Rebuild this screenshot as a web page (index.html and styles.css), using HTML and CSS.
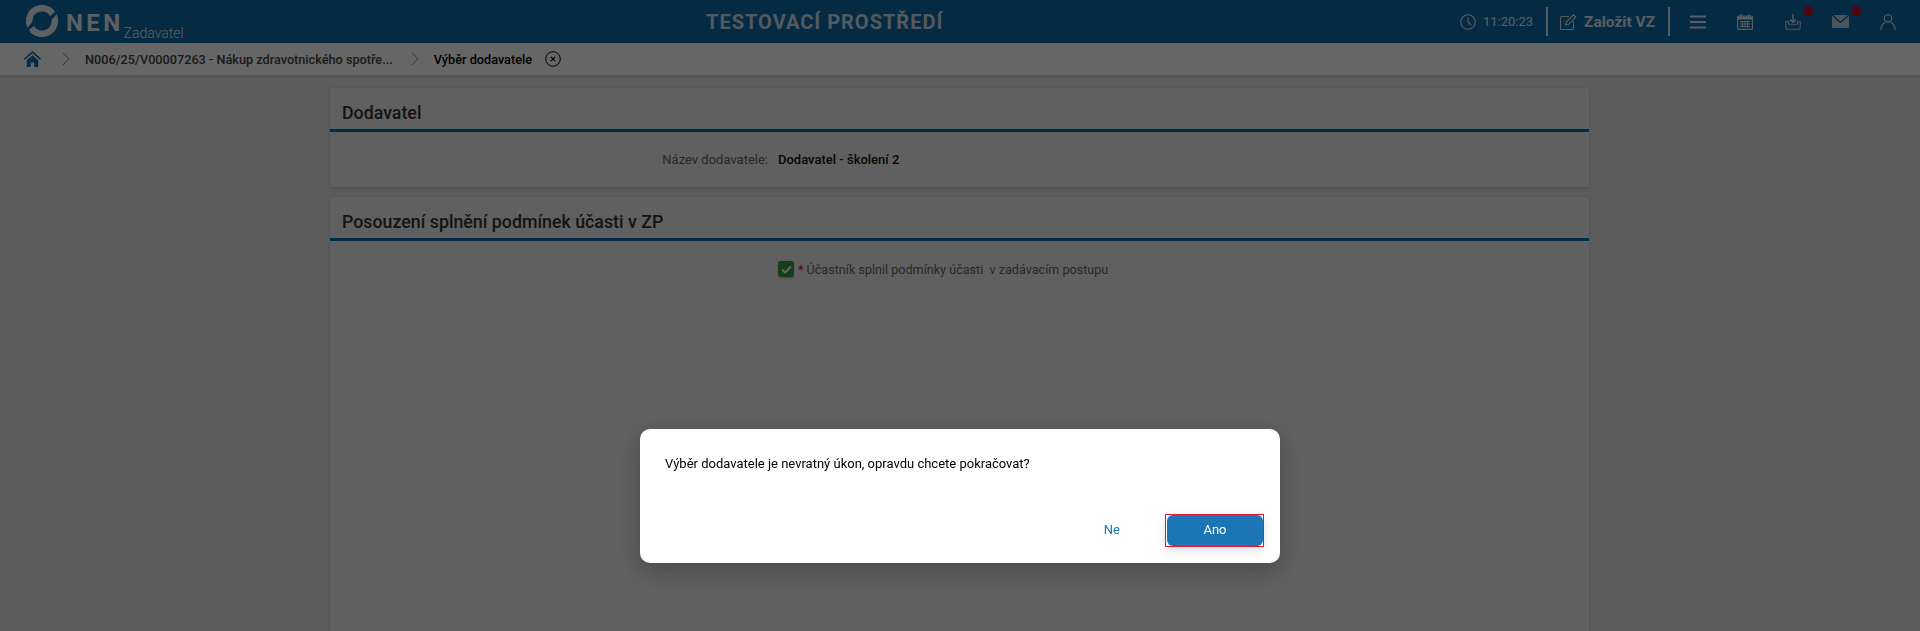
FILE: index.html
```html
<!DOCTYPE html>
<html lang="cs">
<head>
<meta charset="utf-8">
<title>NEN</title>
<link rel="stylesheet" href="styles.css">
</head>
<body>
<header class="topbar">
  <div class="brand">
    <svg class="logo" viewBox="0 0 32 32" width="32" height="32"><path fill="#fff" d="M29.100 6.800A16 16 0 0 0 1.500 22.800C4 19.500 6.500 18 6.500 15.500A9.500 9.500 0 0 1 24 10.900C26 9.800 27.500 8.200 29.100 6.800Z"/><path fill="#fff" transform="rotate(180 16 16)" d="M29.100 6.800A16 16 0 0 0 1.500 22.800C4 19.500 6.500 18 6.500 15.500A9.500 9.500 0 0 1 24 10.900C26 9.800 27.500 8.200 29.100 6.800Z"/></svg>
    <span class="brand-name">NEN</span>
    <span class="brand-role">Zadavatel</span>
  </div>
  <div class="env-title">TESTOVACÍ PROSTŘEDÍ</div>
  <div class="tools">
    <svg class="ico" viewBox="0 0 16 16" width="16" height="16"><circle cx="8" cy="8" r="7.300" fill="none" stroke="#fff" stroke-width="1.100"/><path d="M8 3.500V8l3 3" fill="none" stroke="#fff" stroke-width="1.100"/></svg>
    <span class="time">11:20:23</span>
    <span class="sep"></span>
    <svg class="ico" viewBox="0 0 17 16" width="17" height="16"><path d="M9 2.500H1.500a1 1 0 0 0-1 1V14.500a1 1 0 0 0 1 1h11a1 1 0 0 0 1-1V7.500" fill="none" stroke="#fff" stroke-width="1.100"/><path d="M5.500 10.800 6.200 8 13.500 .8l2.400 2.400L8.500 10.300Z" fill="none" stroke="#fff" stroke-width="1.100"/></svg>
    <span class="create">Založit VZ</span>
    <span class="sep sep-last"></span>
    <div class="icon-row">
      <span class="icon-cell"><svg viewBox="0 0 16 14" width="16" height="14"><path d="M0 1.500h16M0 7h16M0 12.500h16" stroke="#fff" stroke-width="2" fill="none"/></svg></span>
      <span class="icon-cell"><svg viewBox="0 0 16 16" width="16" height="16"><rect x=".6" y="2" width="14.800" height="13.400" rx="1" fill="none" stroke="#fff" stroke-width="1.200"/><path d="M.6 2.500h14.800v3H.6z" fill="#fff"/><path d="M4 0v3M12 0v3" stroke="#fff" stroke-width="1.200"/><path d="M3 7.500h10M3 10h10M3 12.500h10M5.500 7v6.500M8 7v6.500M10.500 7v6.500" stroke="#fff" stroke-width="1" fill="none"/></svg></span>
      <span class="icon-cell"><svg viewBox="0 0 16 16" width="16" height="16"><path d="M8 0v8M5 5.500 8 8.500l3-3" fill="none" stroke="#fff" stroke-width="1.300"/><path d="M3.500 7.500H.8V14a1.300 1.300 0 0 0 1.200 1.300h12A1.300 1.300 0 0 0 15.200 14V7.500h-2.700v2.800h-9Z" fill="none" stroke="#dfe8ef" stroke-width="1.100"/></svg><i class="badge"></i></span>
      <span class="icon-cell"><svg class="mail" viewBox="0 0 17 13" width="17" height="13"><path fill="#fff" d="M1 0h15l-7.500 6.500ZM0 1v10.500A1.500 1.500 0 0 0 1.500 13h14a1.500 1.500 0 0 0 1.500-1.500V1L8.500 8.300Z"/></svg><i class="badge"></i></span>
      <span class="icon-cell"><svg viewBox="0 0 16 16" width="16" height="16"><circle cx="8" cy="4.300" r="3.700" fill="none" stroke="#fff" stroke-width="1.200"/><path d="M.8 16c0-4 2.600-7 4.700-7.800M15.200 16c0-4-2.600-7-4.700-7.800" fill="none" stroke="#fff" stroke-width="1.200"/></svg></span>
    </div>
  </div>
</header>
<nav class="crumbs">
  <svg class="home" viewBox="0 0 17 16" width="17" height="16"><path fill="#0d69aa" d="M8.500 0 0 7.500l1 1.200L8.500 2.300 16 8.700l1-1.200ZM2.800 9.200V16h4v-4.500h3.400V16h4V9.200L8.500 4.300Z"/></svg>
  <svg class="chev first" viewBox="0 0 8 14" width="8" height="14"><path d="M1 1l6 6-6 6" fill="none" stroke="#888" stroke-width="1"/></svg>
  <span class="crumb">N006/25/V00007263 - Nákup zdravotnického spotře...</span>
  <svg class="chev" viewBox="0 0 8 14" width="8" height="14"><path d="M1 1l6 6-6 6" fill="none" stroke="#888" stroke-width="1"/></svg>
  <span class="crumb current">Výběr dodavatele</span>
  <svg class="close" viewBox="0 0 16 16" width="16" height="16"><circle cx="8" cy="8" r="7.300" fill="none" stroke="#000" stroke-width="1"/><path d="M5.800 5.800l4.400 4.400M10.200 5.800l-4.400 4.400" stroke="#000" stroke-width="1.100"/></svg>
</nav>
<main class="content">
  <section class="card first-card">
    <h2 class="card-title">Dodavatel</h2>
    <div class="field-row">
      <span class="field-label">Název dodavatele:</span>
      <span class="field-value">Dodavatel - školení 2</span>
    </div>
  </section>
  <section class="card second-card">
    <h2 class="card-title">Posouzení splnění podmínek účasti v ZP</h2>
    <div class="check-row">
      <span class="checkbox"><svg viewBox="0 0 12 10" width="11" height="9"><path d="M1 5l3.500 3.500L11 1.500" fill="none" stroke="#fff" stroke-width="2.200"/></svg></span>
      <span class="req">*</span>
      <span class="check-label">Účastník splnil podmínky účasti&nbsp; v zadávacím postupu</span>
    </div>
  </section>
</main>
<div class="overlay">
  <div class="dialog">
    <p class="dialog-text">Výběr dodavatele je nevratný úkon, opravdu chcete pokračovat?</p>
    <div class="dialog-actions">
      <button class="btn-text" type="button">Ne</button>
      <button class="btn-primary" type="button"><span class="btn-fill">Ano</span></button>
    </div>
  </div>
</div>
</body>
</html>
```

FILE: styles.css
```css
* { box-sizing: border-box; }
html, body { margin: 0; height: 631px; overflow: hidden; }
body { font-family: Roboto, "Liberation Sans", sans-serif; background: #e8e8e8; color: #333; font-size: 13px; display: flex; flex-direction: column; }

.topbar { flex: none; height: 43px; background: #0d69aa; color: #fff; display: flex; align-items: center; }
.brand { width: 706px; padding: 5px 0 0 26px; display: flex; align-self: stretch; align-items: flex-start; }
.logo { flex: none; display: block; opacity: .9; }
.brand-name { margin: 6px 0 0 8px; font-size: 24px; line-height: 24px; font-weight: 700; letter-spacing: 3.400px; opacity: .9; }
.brand-role { margin: 20px 0 0 0; font-size: 14px; line-height: 17px; font-weight: 300; opacity: .9; }
.env-title { width: 237px; font-size: 20px; font-weight: 700; letter-spacing: 1px; white-space: nowrap; opacity: .8; }
.tools { display: flex; align-items: center; margin-left: 517px; opacity: .85; }
.ico { display: block; flex: none; }
.mail { opacity: .85; }
.time { margin-left: 7px; font-size: 13px; width: 51px; white-space: nowrap; }
.sep { width: 2px; height: 29px; background: #fff; margin: 0 12px 0 12px; }
.sep-last { margin-right: 4px; }
.create { margin-left: 7px; font-size: 15.500px; font-weight: 700; width: 72px; white-space: nowrap; }
.icon-row { display: flex; }
.icon-cell { position: relative; width: 47.500px; height: 20px; display: flex; align-items: center; justify-content: center; }
.badge { position: absolute; top: -6px; left: 34px; width: 10px; height: 10px; border-radius: 50%; background: #e3000f; }

.crumbs { flex: none; height: 32px; background: #fff; display: flex; align-items: center; padding-left: 24px; box-shadow: 0 2px 4px rgba(0,0,0,.12); position: relative; }
.home { flex: none; }
.chev { flex: none; margin: 0 15px 0 18px; }
.chev.first { margin: 0 15px 0 21px; }
.crumb { font-size: 12.700px; font-weight: 500; color: #444; white-space: nowrap; }
.crumb.current { color: #000; }
.close { margin-left: 13px; flex: none; }

.content { flex: 1; min-height: 0; padding: 13px 331px 0 330px; display: flex; flex-direction: column; gap: 10px; }
.card { background: #f0f0f0; box-shadow: 0 1px 4px rgba(0,0,0,.16); }
.first-card { flex: none; height: 99px; }
.second-card { flex: 1; min-height: 0; }
.card-title { margin: 0; height: 44px; padding: 11px 12px 0; font-size: 17.800px; line-height: 28px; font-weight: 500; color: #333; border-bottom: 3px solid #0d69aa; }
.field-row { display: flex; padding-top: 19px; line-height: 18px; }
.field-label { width: 438px; text-align: right; color: #666; font-size: 13px; }
.field-value { margin-left: 10px; font-weight: 500; color: #111; font-size: 13px; }
.check-row { display: flex; align-items: center; padding: 20px 0 0 448px; }
.checkbox { width: 16px; height: 16px; border-radius: 3px; background: #2f9e3a; display: flex; align-items: center; justify-content: center; box-shadow: 0 1px 2px rgba(0,0,0,.3); }
.req { color: #d0021b; margin-left: 4px; font-size: 13px; }
.check-label { margin-left: 3px; color: #666; font-size: 12.600px; white-space: nowrap; }

.overlay { position: fixed; inset: 0; background: rgba(0,0,0,.6); display: flex; justify-content: center; align-items: flex-start; padding-top: 429px; }
.dialog { width: 640px; height: 134px; background: #fff; border-radius: 10px; box-shadow: 0 8px 24px rgba(0,0,0,.25); padding: 25px 16px 16px 25px; display: flex; flex-direction: column; }
.dialog-text { margin: 1px 0 0; font-size: 13px; line-height: 18px; color: #000; }
.dialog-actions { display: flex; justify-content: flex-end; align-items: center; margin-top: 41px; }
.btn-text { border: 0; background: none; padding: 0 0 2px; font: 400 13px Roboto, sans-serif; color: #1c75b5; margin-right: 45px; }
.btn-primary { width: 99px; height: 33px; border: 1px solid #e8112d; background: #fff; padding: 0 0 0 1px; display: flex; box-shadow: 0 4px 10px rgba(0,0,0,.12); }
.btn-fill { flex: 1; background: #1c75b5; border-radius: 6px; color: #fff; font: 400 13px/30px Roboto, sans-serif; text-align: center; }
```
